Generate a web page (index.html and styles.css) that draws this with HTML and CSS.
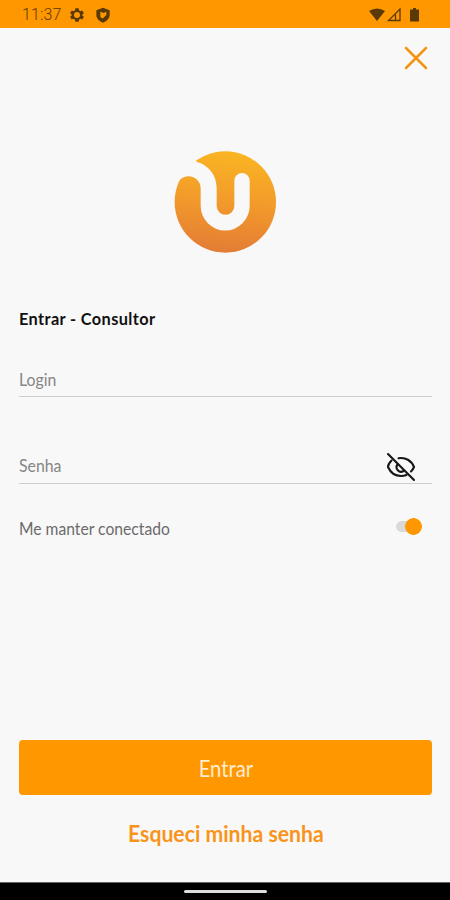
FILE: index.html
```html
<!DOCTYPE html>
<html lang="pt-BR">
<head>
<meta charset="utf-8">
<title>Entrar</title>
<link rel="stylesheet" href="styles.css">
</head>
<body>
<div class="screen">
  <header class="status">
    <span class="time">11:37</span>
    <svg class="gear" width="16" height="16" viewBox="0 0 24 24"><path fill-rule="evenodd" d="M9.500 2h5l.5 3 2 1.200 2.900-1.100 2.500 4.300L20 11.300v1.400l2.400 1.900-2.500 4.300L17 17.800 15 19l-.5 3h-5L9 19l-2-1.200-2.900 1.100-2.500-4.300L4 12.700v-1.400L1.600 9.400l2.500-4.300L7 6.200 9 5zM12 7.500a4.500 4.500 0 1 0 0 9 4.500 4.500 0 0 0 0-9z"/></svg>
    <svg class="shield" width="16" height="16" viewBox="0 0 24 24"><path fill-rule="evenodd" d="M12 1l10 4v7c0 5-4 9-10 11.500C6 21 2 17 2 12V5zM8 7v6c0 3 2 4 4 4l5-5V7l-4 2z"/></svg>
    <svg class="signals" width="54" height="16" viewBox="0 0 54 16"><path d="M1 4Q9-1 17 4L9 14z"/><path class="cell" d="M32 2v11.500H20.500zM27.500 7.500v6"/><path d="M42 2.500h3V1h3v1.500h3v12h-9z"/></svg>
  </header>
  <main class="content">
    <svg class="close" width="24" height="24" viewBox="0 0 24 24"><path d="M2 2l20 20M22 2L2 22"/></svg>
    <svg class="logo" width="120" height="120" viewBox="0 0 360 360">
      <defs><linearGradient id="sun" x1="0.55" y1="0" x2="0.45" y2="1"><stop offset="0" stop-color="#fab522"/><stop offset=".5" stop-color="#f29a2b"/><stop offset="1" stop-color="#e37c35"/></linearGradient></defs>
      <circle cx="181" cy="186" r="152" fill="url(#sun)"/>
      <path fill="#f8f8f8" d="M94 65C132 75 155 106 155 144V198A26.500 26.500 0 0 0 208 198V122A23 23 0 0 1 254 122V198A73.500 73.500 0 0 1 107 198V145A36.500 36.500 0 0 0 34 145H10V20H80z"/>
    </svg>
    <h1 class="title"><span>Entrar - Consultor</span></h1>
    <div class="field login"><span>Login</span></div>
    <div class="field password"><span>Senha</span>
      <svg class="eye" width="30" height="30" viewBox="0 0 30 30"><path d="M2 2l26 26"/><path d="M5.500 8.500C3.500 10.500 2 13 2 15c2.500 5.500 7.500 9 13 9 2 0 4-.4 5.500-1M12.500 6.300C19.500 5 25.500 8.500 28 15c-.7 1.800-1.700 3.200-3 4.500M11.500 12.500a4.500 4.500 0 0 0 6 6.500"/></svg>
    </div>
    <div class="keep"><span>Me manter conectado</span><i class="toggle"></i></div>
    <button class="submit"><span>Entrar</span></button>
    <a class="forgot"><span>Esqueci minha senha</span></a>
  </main>
  <footer class="nav"><i></i></footer>
</div>
</body>
</html>
```
FILE: styles.css
```css
* { box-sizing: border-box; }
body { margin: 0; font-family: Lato, "Liberation Sans", sans-serif; }
.screen { width: 450px; height: 900px; display: flex; flex-direction: column; background: #f8f8f8; }
.status { height: 27.500px; background: #ff9800; display: flex; align-items: center; padding: 2px 28px 0 22px; fill: #5a3905; }
.time { width: 40px; font: 300 16px/20px Roboto, sans-serif; letter-spacing: .1px; color: #5a3905; }
.gear { margin-left: 7px; }
.shield { margin-left: 10px; }
.signals { margin-left: auto; }
.cell { fill: none; stroke: #5a3905; stroke-width: 1.3; }
.content { flex: 1; display: flex; flex-direction: column; padding: 0 18px 0 19px; }
.content span { display: inline-block; transform-origin: 0 50%; white-space: nowrap; }
.close { align-self: flex-end; margin: 18.500px 4px 0 0; fill: none; stroke: #f59312; stroke-width: 2.500; stroke-linecap: round; }
.logo { margin: 70px 0 0 146px; }
.title { margin: 47px 0 0; height: 24px; font-size: 17px; line-height: 24px; font-weight: 700; color: #111; }
.title span { transform: scaleX(.96); letter-spacing: .4px; }
.field { display: flex; justify-content: space-between; border-bottom: 1px solid #cfcfcf; font-size: 18px; line-height: 24px; color: #858585; }
.field span { transform: scaleX(.88); }
.login { height: 30px; margin-top: 36px; }
.password { height: 31px; margin-top: 56px; }
.eye { margin: -1px 16px 0 0; fill: none; stroke: #161616; stroke-width: 2.1; stroke-linecap: round; }
.keep { margin-top: 33px; height: 24px; display: flex; justify-content: space-between; font-size: 18px; line-height: 24px; color: #6b6b6b; }
.keep span { transform: scaleX(.87); margin-top: -1px; }
.toggle { width: 26px; height: 17px; margin: 1px 10px 0 0; background: radial-gradient(circle at 17.500px 8.500px, #ff9800 8px, transparent 8.700px), radial-gradient(circle at 5.500px 8.500px, #d9d9d9 5px, transparent 5.700px), linear-gradient(#d9d9d9, #d9d9d9) 6px 3px / 10px 11px no-repeat; }
.submit { margin-top: 199px; height: 55px; border: 0; border-radius: 4px; background: #ff9800; color: #ffebd0; font: 400 23px/28px Lato, sans-serif; padding: 1px 0 0; }
.submit span, .forgot span { transform-origin: 50% 50%; }
.submit span { transform: scaleX(.88); }
.forgot { margin-top: 25px; text-align: center; color: #f9941b; font-size: 22.500px; line-height: 28px; font-weight: 700; }
.forgot span { transform: scaleX(.942); }
.nav { height: 18px; background: #000; border-top: 1px solid #666; display: flex; justify-content: center; padding-top: 7px; }
.nav i { width: 83px; height: 3px; border-radius: 2px; background: #ddd; }
```
